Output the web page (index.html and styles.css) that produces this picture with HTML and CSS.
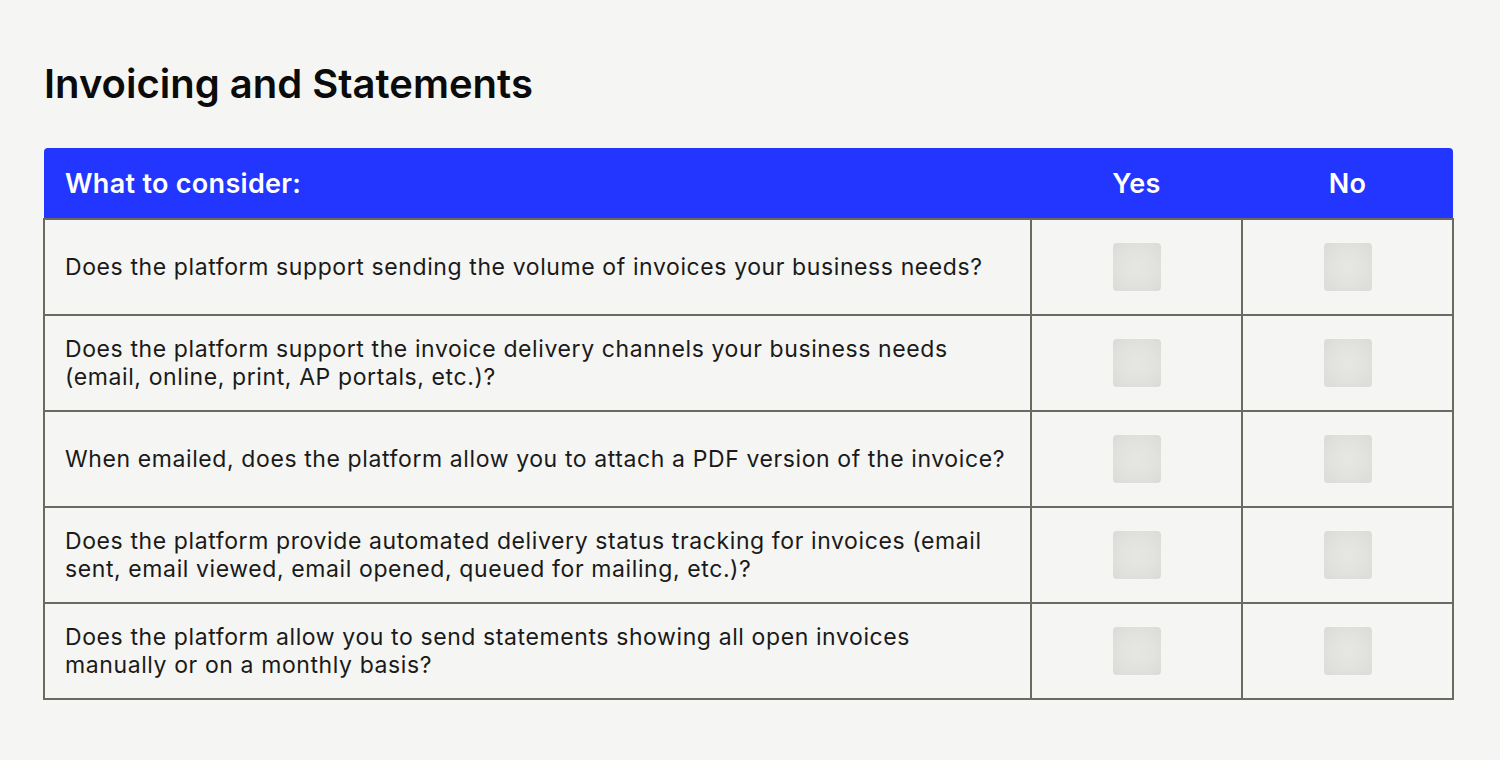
FILE: index.html
```html
<!DOCTYPE html>
<html lang="en">
<head>
<meta charset="utf-8">
<title>Invoicing and Statements</title>
<link rel="stylesheet" href="styles.css">
</head>
<body>
<main class="page">
  <h1 class="title">Invoicing and Statements</h1>
  <table class="checklist">
    <thead>
      <tr>
        <th class="col-q">What to consider:</th>
        <th class="col-c">Yes</th>
        <th class="col-c">No</th>
      </tr>
    </thead>
    <tbody>
      <tr>
        <td class="q">Does the platform support sending the volume of invoices your business needs?</td>
        <td class="c"><span class="box"></span></td>
        <td class="c"><span class="box"></span></td>
      </tr>
      <tr>
        <td class="q">Does the platform support the invoice delivery channels your business needs<br>(email, online, print, AP portals, etc.)?</td>
        <td class="c"><span class="box"></span></td>
        <td class="c"><span class="box"></span></td>
      </tr>
      <tr>
        <td class="q">When emailed, does the platform allow you to attach a PDF version of the invoice?</td>
        <td class="c"><span class="box"></span></td>
        <td class="c"><span class="box"></span></td>
      </tr>
      <tr>
        <td class="q">Does the platform provide automated delivery status tracking for invoices (email<br>sent, email viewed, email opened, queued for mailing, etc.)?</td>
        <td class="c"><span class="box"></span></td>
        <td class="c"><span class="box"></span></td>
      </tr>
      <tr>
        <td class="q">Does the platform allow you to send statements showing all open invoices<br>manually or on a monthly basis?</td>
        <td class="c"><span class="box"></span></td>
        <td class="c"><span class="box"></span></td>
      </tr>
    </tbody>
  </table>
</main>
</body>
</html>
```

FILE: styles.css
```css
html, body {
  margin: 0;
  padding: 0;
  background: #f5f5f3;
}
body {
  font-family: Inter, "Liberation Sans", sans-serif;
  color: #161616;
}
.page {
  padding: 59px 47px 0 43px;
}
.title {
  margin: 0 0 39px 1px;
  font-size: 40px;
  line-height: 50px;
  font-weight: 600;
  letter-spacing: 0;
  color: #0b0b0b;
}
.checklist {
  width: 1409px;
  border-collapse: collapse;
  table-layout: fixed;
}
.checklist th,
.checklist td {
  box-sizing: border-box;
}
.checklist th {
  background: #2236ff;
  color: #ffffff;
  font-size: 27px;
  font-weight: 600;
  letter-spacing: 0.3px;
  height: 71px;
  padding: 0;
}
.checklist th:first-child { border-top-left-radius: 4px; }
.checklist th:last-child { border-top-right-radius: 4px; }
.col-q {
  width: 987px;
  text-align: left;
  padding-left: 21px !important;
}
.col-c {
  width: 211px;
  text-align: center;
}
.checklist td {
  border: 2px solid #6b6a5e;
  height: 96px;
  padding: 0;
  vertical-align: middle;
}
.q {
  padding-left: 20px !important;
  font-size: 23px;
  line-height: 28px;
  letter-spacing: 0.6px;
  color: #1a1a1a;
}
.c {
  text-align: center;
}
.box {
  display: inline-block;
  width: 48px;
  height: 48px;
  border-radius: 4px;
  background: radial-gradient(circle at center, #e6e6e2 0%, #e2e2de 50%, #dadad6 100%);
  vertical-align: middle;
}
```
